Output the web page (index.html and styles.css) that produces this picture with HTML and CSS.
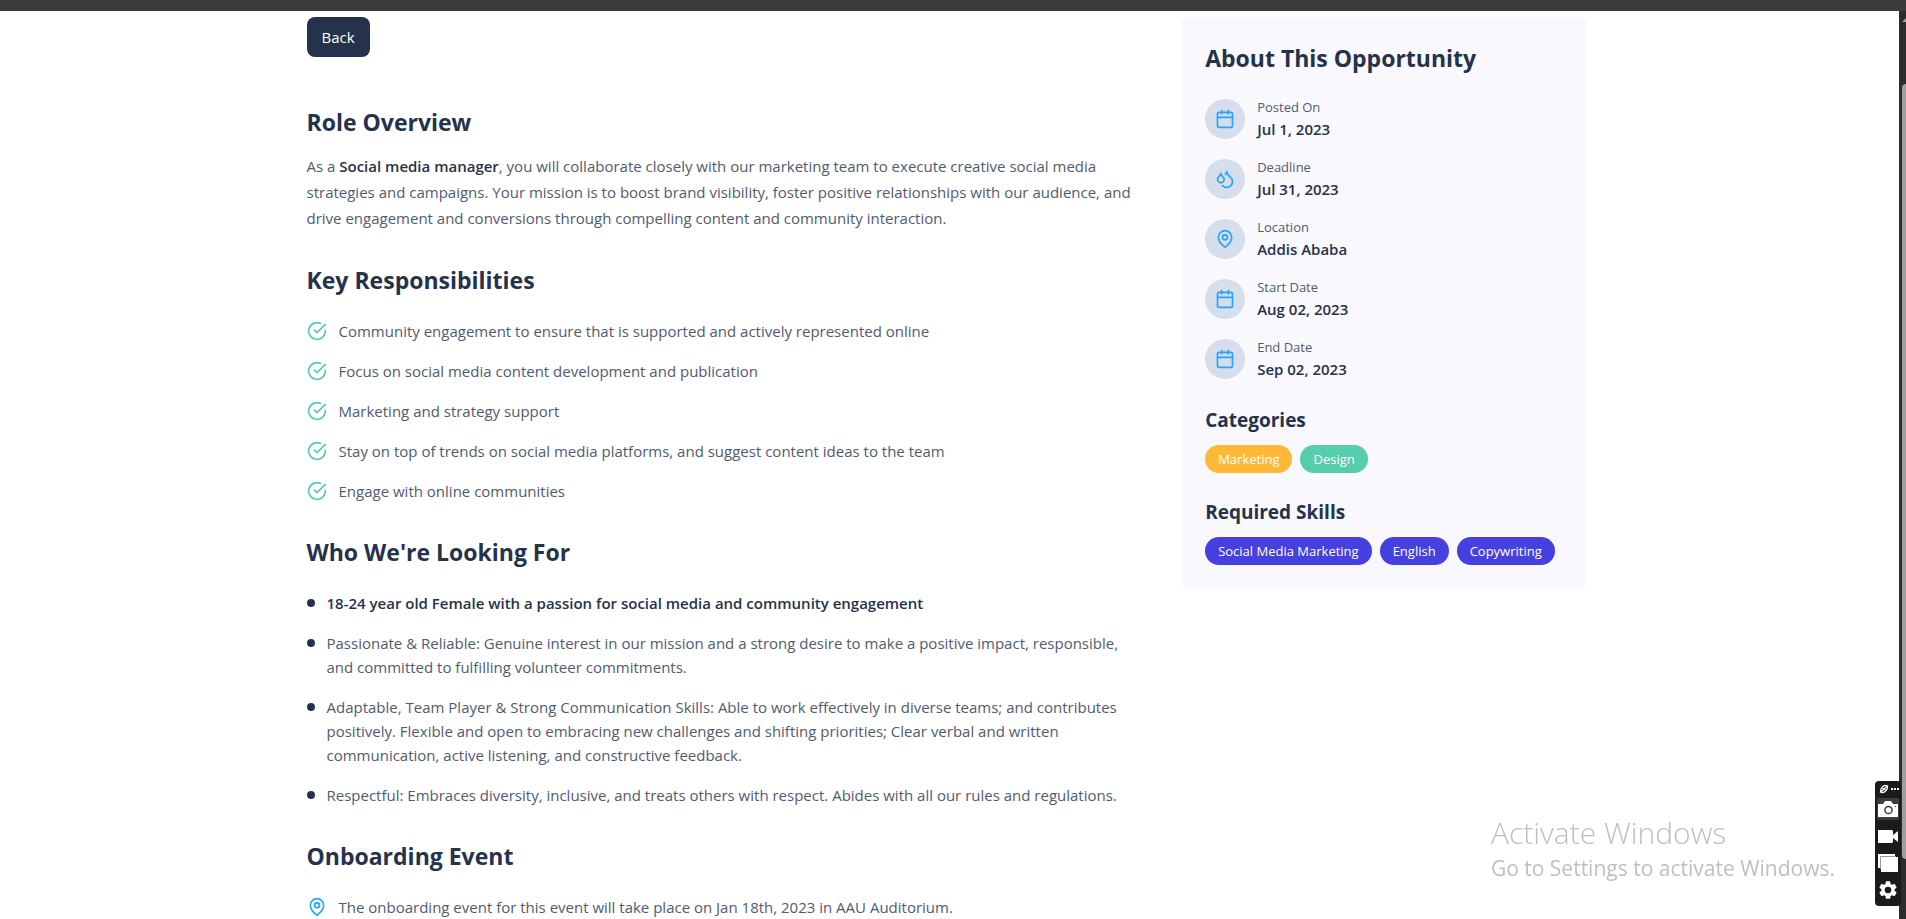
FILE: index.html
```html
<!DOCTYPE html>
<html lang="en">
<head>
<meta charset="utf-8">
<title>Social media manager</title>
<link rel="stylesheet" href="styles.css">
</head>
<body>
<svg class="defs" aria-hidden="true">
  <symbol id="check" viewBox="0 0 24 24"><path d="M22 11.08V12a10 10 0 1 1-5.93-9.14"/><path d="M22 4 12 14.01l-3-3"/></symbol>
  <symbol id="calendar" viewBox="0 0 24 24"><rect x="3" y="4" width="18" height="18" rx="2"/><path d="M16 2v4M8 2v4M3 10h18"/></symbol>
  <symbol id="pin" viewBox="0 0 24 24"><path d="M20 10c0 6-8 12-8 12s-8-6-8-12a8 8 0 0 1 16 0Z"/><circle cx="12" cy="10" r="3"/></symbol>
  <symbol id="drops" viewBox="0 0 24 24"><path d="M7 16.3c2.2 0 4-1.83 4-4.05 0-1.16-.57-2.26-1.71-3.19S7.29 6.75 7 5.3c-.29 1.45-1.14 2.84-2.29 3.76S3 11.1 3 12.25c0 2.22 1.8 4.05 4 4.05z"/><path d="M12.56 6.6A10.97 10.97 0 0 0 14 3.02c.5 2.5 2 4.9 4 6.5s3 3.5 3 5.5a6.98 6.98 0 0 1-11.91 4.97"/></symbol>
</svg>
<div class="topbar"></div>
<div class="page">
  <div class="content">
    <div class="container">
      <main class="main">
        <button class="back" type="button">Back</button>
        <section class="section">
          <h2 class="heading">Role Overview</h2>
          <p class="intro">As a <strong class="strong">Social media manager</strong>, you will collaborate closely with our marketing team to execute creative social media strategies and campaigns. Your mission is to boost brand visibility, foster positive relationships with our audience, and drive engagement and conversions through compelling content and community interaction.</p>
        </section>
        <section class="section">
          <h2 class="heading">Key Responsibilities</h2>
          <ul class="list">
            <li class="item"><svg class="icon green"><use href="#check"/></svg><span>Community engagement to ensure that is supported and actively represented online</span></li>
            <li class="item"><svg class="icon green"><use href="#check"/></svg><span>Focus on social media content development and publication</span></li>
            <li class="item"><svg class="icon green"><use href="#check"/></svg><span>Marketing and strategy support</span></li>
            <li class="item"><svg class="icon green"><use href="#check"/></svg><span>Stay on top of trends on social media platforms, and suggest content ideas to the team</span></li>
            <li class="item"><svg class="icon green"><use href="#check"/></svg><span>Engage with online communities</span></li>
          </ul>
        </section>
        <section class="section">
          <h2 class="heading">Who We're Looking For</h2>
          <ul class="list">
            <li class="item"><span class="dot"></span><strong class="strong">18-24 year old Female with a passion for social media and community engagement</strong></li>
            <li class="item"><span class="dot"></span><span>Passionate &amp; Reliable: Genuine interest in our mission and a strong desire to make a positive impact, responsible, and committed to fulfilling volunteer commitments.</span></li>
            <li class="item"><span class="dot"></span><span>Adaptable, Team Player &amp; Strong Communication Skills: Able to work effectively in diverse teams; and contributes positively. Flexible and open to embracing new challenges and shifting priorities; Clear verbal and written communication, active listening, and constructive feedback.</span></li>
            <li class="item"><span class="dot"></span><span>Respectful: Embraces diversity, inclusive, and treats others with respect. Abides with all our rules and regulations.</span></li>
          </ul>
        </section>
        <section class="section">
          <h2 class="heading">Onboarding Event</h2>
          <ul class="list">
            <li class="item"><svg class="icon blue"><use href="#pin"/></svg><span>The onboarding event for this event will take place on Jan 18th, 2023 in AAU Auditorium.</span></li>
          </ul>
        </section>
      </main>
      <aside class="card">
        <h2 class="heading">About This Opportunity</h2>
        <dl class="facts">
          <div class="fact"><span class="badge"><svg class="icon blue"><use href="#calendar"/></svg></span><div><dt>Posted On</dt><dd>Jul 1, 2023</dd></div></div>
          <div class="fact"><span class="badge"><svg class="icon blue"><use href="#drops"/></svg></span><div><dt>Deadline</dt><dd>Jul 31, 2023</dd></div></div>
          <div class="fact"><span class="badge"><svg class="icon blue"><use href="#pin"/></svg></span><div><dt>Location</dt><dd>Addis Ababa</dd></div></div>
          <div class="fact"><span class="badge"><svg class="icon blue"><use href="#calendar"/></svg></span><div><dt>Start Date</dt><dd>Aug 02, 2023</dd></div></div>
          <div class="fact"><span class="badge"><svg class="icon blue"><use href="#calendar"/></svg></span><div><dt>End Date</dt><dd>Sep 02, 2023</dd></div></div>
        </dl>
        <h3 class="subheading">Categories</h3>
        <div class="tags"><span class="tag yellow">Marketing</span><span class="tag teal">Design</span></div>
        <h3 class="subheading">Required Skills</h3>
        <div class="tags"><span class="tag">Social Media Marketing</span><span class="tag">English</span><span class="tag">Copywriting</span></div>
      </aside>
    </div>
  </div>
  <div class="scrollbar"><svg class="arrow" viewBox="0 0 4 4"><path d="M4 0v4H0z"/></svg><div class="thumb"></div></div>
</div>
<div class="watermark"><p class="wm-title">Activate Windows</p><p class="wm-text">Go to Settings to activate Windows.</p></div>
<div class="recorder">
  <div class="rec-head">
    <svg width="10" height="10" viewBox="0 0 10 10"><g fill="none" stroke="#fff" stroke-width="1.3"><ellipse cx="5" cy="5" rx="4" ry="2.6" transform="rotate(-50 5 5)"/><path d="M1 8.5 9 1.5M3.5 4.2 6.5 6.2"/></g></svg>
    <svg width="8" height="2" viewBox="0 0 8 2"><path fill="#fff" d="M0 0h2v2H0zM3 0h2v2H3zM6 0h2v2H6z"/></svg>
  </div>
  <button class="rec-btn active" type="button" aria-label="Screenshot"><svg width="20" height="16" viewBox="0 0 20 16"><path fill="#fff" d="M0 3h5l2-3h6l2 3h5v13H0z"/><circle cx="10.5" cy="9" r="3.6" fill="#fff" stroke="#3c3c3c" stroke-width="1.5"/><path fill="#3c3c3c" d="M17 5h1v1h-1z"/></svg></button>
  <button class="rec-btn" type="button" aria-label="Record video"><svg width="20" height="13" viewBox="0 0 20 13"><path fill="#fff" d="M0 0h14l1 1v4l5-4v11l-5-4v4l-1 1H0z"/></svg></button>
  <button class="rec-btn" type="button" aria-label="Gallery"><svg width="20" height="18" viewBox="0 0 20 18"><path fill="#fff" d="M0 0h17v2H2v12H0z"/><path fill="#999" d="M2 2h16v1H3v12H2z"/><path fill="#fff" d="M3 3h17v15H3z"/></svg></button>
  <button class="rec-btn" type="button" aria-label="Settings"><svg width="22" height="22" viewBox="0 0 24 24"><path fill="#fff" d="M19.14 12.94a7 7 0 0 0 0-1.88l2.03-1.58a.5.5 0 0 0 .12-.61l-1.92-3.32a.5.5 0 0 0-.59-.22l-2.39.96a7 7 0 0 0-1.62-.94L14.4 2.8a.5.5 0 0 0-.48-.4h-3.84a.5.5 0 0 0-.47.4l-.36 2.55a7 7 0 0 0-1.62.94l-2.39-.96a.5.5 0 0 0-.59.22L2.74 8.87a.5.5 0 0 0 .12.61l2.03 1.58a7 7 0 0 0 0 1.88l-2.03 1.58a.5.5 0 0 0-.12.61l1.92 3.32c.12.22.37.29.59.22l2.39-.96c.5.38 1.03.7 1.62.94l.36 2.54c.05.24.24.41.48.41h3.84c.24 0 .44-.17.47-.41l.36-2.54a7 7 0 0 0 1.62-.94l2.39.96c.22.08.47 0 .59-.22l1.92-3.32a.5.5 0 0 0-.12-.61zM12 15.6a3.6 3.6 0 1 1 0-7.2 3.6 3.6 0 0 1 0 7.2z"/></svg></button>
</div>
</body>
</html>
```
FILE: styles.css
```css
* { box-sizing: border-box; }
body {
  margin: 0;
  min-height: 100vh;
  display: flex;
  flex-direction: column;
  background: #fff;
  color: #515b6f;
  font: 15px/24px "Open Sans", sans-serif;
}
h2, h3, p, ul, dl, dd { margin: 0; padding: 0; }
.defs { display: none; }
.topbar { height: 11px; background: #3b3b3b; }
.page { flex: 1; display: flex; }
.content { flex: 1; padding: 6px 6px 0 0; }
.container {
  display: grid;
  grid-template-columns: repeat(3, 1fr);
  gap: 32px;
  align-items: start;
  max-width: 1280px;
  margin: 0 auto;
}
.main { grid-column: span 2; padding-right: 8px; }
.back {
  display: block;
  height: 40px;
  margin-bottom: 48px;
  padding: 0 15px;
  border: 0;
  border-radius: 8px;
  background: #25324b;
  color: #fff;
  font: inherit;
}
.section + .section { margin-top: 32px; }
.heading { color: #25324b; font-size: 23px; line-height: 34px; font-weight: 700; }
.intro { margin-top: 14px; line-height: 26px; }
.strong, dd { color: #25324b; font-weight: 600; }
.list { margin-top: 22px; list-style: none; display: grid; gap: 16px; }
.item { display: flex; gap: 12px; }
.icon {
  flex: none;
  width: 20px;
  height: 20px;
  fill: none;
  stroke: currentColor;
  stroke-width: 2;
  stroke-linecap: round;
  stroke-linejoin: round;
}
.item .icon { margin-top: 2px; }
.green { color: #56cdad; }
.blue { color: #26a4ff; }
.dot { flex: none; width: 8px; height: 8px; margin-top: 8px; border-radius: 50%; background: #25324b; }
.card { padding: 24px; border-radius: 8px; background: #f8f8fd; }
.facts { margin-top: 22px; display: grid; gap: 16px; }
.fact { display: flex; align-items: center; gap: 12px; }
.badge { width: 40px; height: 40px; display: grid; place-items: center; border-radius: 50%; background: #d6ddeb; }
dt { font-size: 13px; line-height: 20px; }
.subheading { margin: 24px 0 10px; color: #25324b; font-size: 19px; line-height: 30px; font-weight: 700; }
.tags { display: flex; flex-wrap: wrap; gap: 8px; }
.tag { padding: 4px 13px; border-radius: 14px; background: #4640de; color: #fff; font-size: 13px; line-height: 20px; }
.tag.yellow { background: #ffb836; }
.tag.teal { background: #56cdad; }
.scrollbar { width: 7px; padding: 7px 0 60px 3px; background: #2c2c2c; display: flex; flex-direction: column; }
.arrow { width: 4px; height: 4px; fill: #9f9f9f; }
.thumb { flex: 1; margin-top: 62px; border-radius: 4px 0 0 4px; background: #9f9f9f; }
.watermark { position: fixed; right: 71px; bottom: 37px; color: #bfbfbf; }
.wm-title { font-size: 30px; line-height: 42px; font-weight: 300; }
.wm-text { font-size: 21px; line-height: 28px; }
.recorder {
  position: fixed;
  right: 5px;
  bottom: 13px;
  width: 26px;
  padding: 3px 2px 5px;
  border-radius: 4px;
  background: #1b1b1b;
}
.rec-head { height: 14px; padding: 0 0 4px 2px; display: flex; align-items: center; gap: 2px; }
.rec-btn { width: 22px; height: 22px; padding: 0; border: 0; background: none; display: grid; place-items: center; }
.rec-btn + .rec-btn { margin-top: 5px; }
.rec-btn.active { background: #3c3c3c; }
```
